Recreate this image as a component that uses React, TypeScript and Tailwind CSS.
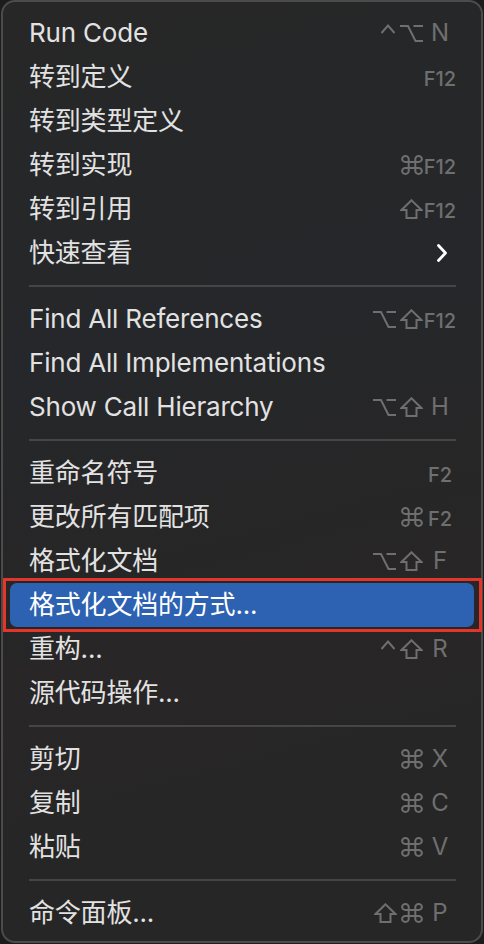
import React from "react";

type Mod = "ctrl" | "opt" | "shift" | "cmd";

const Ctrl = () => (
  <svg width="16" height="20" viewBox="0 0 16 20" fill="none" stroke="currentColor" strokeWidth="2">
    <path d="M1.5 10 L8 2.5 L14.5 10" />
  </svg>
);
const Opt = () => (
  <svg width="23" height="20" viewBox="0 0 23 20" fill="none" stroke="currentColor" strokeWidth="2">
    <path d="M0 3 H8 L15.5 18 H23 M13.5 3 H23" />
  </svg>
);
const Shift = () => (
  <svg width="23" height="20" viewBox="0 0 23 20" fill="none" stroke="currentColor" strokeWidth="2" strokeLinejoin="miter">
    <path d="M11.5 1.3 L1.5 11 H6.5 V19 H16.5 V11 H21.5 Z" />
  </svg>
);
const Cmd = () => (
  <svg width="22" height="20" viewBox="2 2 20 20" fill="none" stroke="currentColor" strokeWidth="1.8" preserveAspectRatio="none">
    <path d="M15 6v12a3 3 0 1 0 3-3H6a3 3 0 1 0 3 3V6a3 3 0 1 0-3 3h12a3 3 0 1 0-3-3" />
  </svg>
);

const modIcon = (m: Mod, i: number) => {
  switch (m) {
    case "ctrl":
      return <Ctrl key={i} />;
    case "opt":
      return <Opt key={i} />;
    case "shift":
      return <Shift key={i} />;
    case "cmd":
      return <Cmd key={i} />;
  }
};

type Item = {
  label: string;
  mods?: Mod[];
  keyLabel?: string;
  fn?: boolean;
  submenu?: boolean;
  active?: boolean;
};

type Entry = Item | "sep";

const entries: Entry[] = [
  { label: "Run Code", mods: ["ctrl", "opt"], keyLabel: "N" },
  { label: "转到定义", keyLabel: "F12", fn: true },
  { label: "转到类型定义" },
  { label: "转到实现", mods: ["cmd"], keyLabel: "F12", fn: true },
  { label: "转到引用", mods: ["shift"], keyLabel: "F12", fn: true },
  { label: "快速查看", submenu: true },
  "sep",
  { label: "Find All References", mods: ["opt", "shift"], keyLabel: "F12", fn: true },
  { label: "Find All Implementations" },
  { label: "Show Call Hierarchy", mods: ["opt", "shift"], keyLabel: "H" },
  "sep",
  { label: "重命名符号", keyLabel: "F2", fn: true },
  { label: "更改所有匹配项", mods: ["cmd"], keyLabel: "F2", fn: true },
  { label: "格式化文档", mods: ["opt", "shift"], keyLabel: "F" },
  { label: "格式化文档的方式...", active: true },
  { label: "重构...", mods: ["ctrl", "shift"], keyLabel: "R" },
  { label: "源代码操作..." },
  "sep",
  { label: "剪切", mods: ["cmd"], keyLabel: "X" },
  { label: "复制", mods: ["cmd"], keyLabel: "C" },
  { label: "粘贴", mods: ["cmd"], keyLabel: "V" },
  "sep",
  { label: "命令面板...", mods: ["shift", "cmd"], keyLabel: "P" },
];

function Row({ item }: { item: Item }) {
  const row = (
    <div
      className={
        "flex h-[44px] items-center rounded-[7px] pl-[19px] pr-[17px] " +
        (item.active ? "bg-[#2c62b1] text-white" : "text-[#e2e2e2]")
      }
    >
      <span className="flex-1 text-[26px] leading-none tracking-[-0.2px] whitespace-nowrap">{item.label}</span>
      <div className="flex items-center text-[#6f6f6f]">
        {item.mods && item.mods.length > 0 && (
          <div className="flex items-center gap-[4px]">{item.mods.map((m, i) => modIcon(m, i))}</div>
        )}
        {item.submenu ? (
          <div className="flex w-[34px] justify-center pl-[4px] text-white">
            <svg width="12" height="20" viewBox="0 0 12 20" fill="none" stroke="currentColor" strokeWidth="2.8" strokeLinecap="round" strokeLinejoin="round">
              <path d="M2.5 2.5 L9.5 10 L2.5 17.5" />
            </svg>
          </div>
        ) : item.keyLabel ? (
          <div
            className={
              "flex w-[34px] justify-center leading-none " +
              (item.fn ? "text-[20px] font-medium pt-[3px]" : "text-[24px]")
            }
          >
            {item.keyLabel}
          </div>
        ) : null}
      </div>
    </div>
  );
  if (item.active) {
    return (
      <div className="relative">
        {row}
        <div className="pointer-events-none absolute -left-[7px] -right-[8px] -top-[5px] -bottom-[5px] border-[3px] border-[#e4352b]" />
      </div>
    );
  }
  return row;
}

export default function App() {
  return (
    <div
      className="h-[944px] w-[484px] bg-[#1c1c1c] px-[1px] pb-[1px]"
      style={{ fontFamily: 'Inter, "Noto Sans CJK SC", "Noto Sans", sans-serif' }}
    >
      <div className="h-full rounded-[14px] border-2 border-[#4b4b4b] bg-[linear-gradient(165deg,#272727_0%,#25272a_35%,#282626_65%,#262626_100%)] px-[7px] pt-[9px] pb-[6px]">
        {entries.map((e, i) =>
          e === "sep" ? (
            <div key={i} className="flex h-[22px] items-center pl-[19px] pr-[18px]">
              <div className="h-[2px] w-full bg-[#464646]" />
            </div>
          ) : (
            <Row key={i} item={e} />
          )
        )}
      </div>
    </div>
  );
}
